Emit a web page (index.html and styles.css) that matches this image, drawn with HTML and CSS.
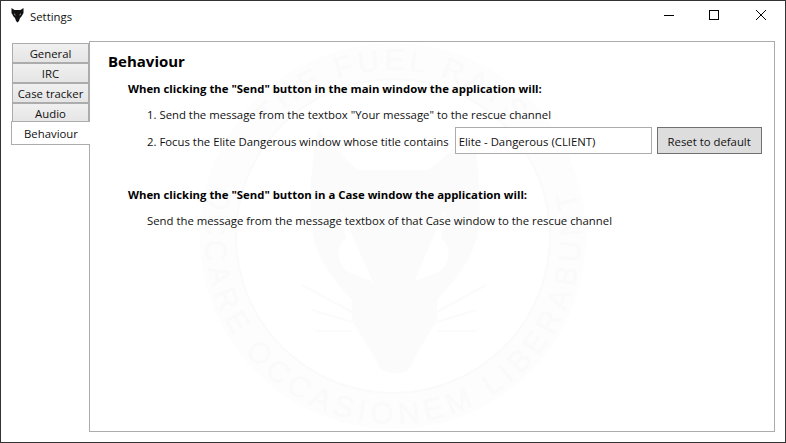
FILE: index.html
```html
<!DOCTYPE html>
<html lang="en">
<head>
  <meta charset="UTF-8">
  <meta name="viewport" content="width=device-width, initial-scale=1.0">
  <title>Settings</title>
  <link rel="stylesheet" href="styles.css">
</head>
<body>
  <div class="window">
    <div class="titlebar">
      <svg class="app-icon" width="16" height="16" viewBox="0 0 16 16">
        <path d="M1.5 0 L4.5 2 L10.5 2 L13.5 0 L13.5 5 L11.5 8.5 L10 10 L9 13 L7.5 14.5 L6 13 L5 10 L3.5 8.5 L1.5 5 Z" fill="#111"/>
        <path d="M4 5 L6 7.5 L4.5 7 Z M11 5 L9 7.5 L10.5 7 Z" fill="#bbb"/>
      </svg>
      <span class="title">Settings</span>
      <div class="controls">
        <svg width="46" height="30" viewBox="0 0 46 30"><path d="M17 14.5 H27" stroke="#000" fill="none"/></svg>
        <svg width="46" height="30" viewBox="0 0 46 30"><rect x="16.5" y="9.5" width="9" height="9" stroke="#000" fill="none"/></svg>
        <svg width="46" height="30" viewBox="0 0 46 30"><path d="M17 9 L27 19 M27 9 L17 19" stroke="#000" fill="none"/></svg>
      </div>
    </div>

    <div class="content">
      <div class="tabs">
        <div class="tab">General</div>
        <div class="tab">IRC</div>
        <div class="tab">Case tracker</div>
        <div class="tab">Audio</div>
        <div class="tab tab-active">Behaviour</div>
      </div>

      <div class="panel">
        <svg class="watermark" width="400" height="400" viewBox="0 0 400 400">
          <defs>
            <path id="ringTop" d="M 34 200 A 166 166 0 0 1 366 200"/>
            <path id="ringBottom" d="M 46 92 A 188 188 0 1 0 354 92"/>
          </defs>
          <circle class="ring" cx="200" cy="200" r="175"/>
          <circle class="ring-line" cx="200" cy="200" r="157"/>
          <text class="watermark-text"><textPath href="#ringTop" startOffset="50%" text-anchor="middle">THE FUEL RATS</textPath></text>
          <text class="watermark-text watermark-motto"><textPath href="#ringBottom" startOffset="50%" text-anchor="middle">OCCARE OCCASIONEM LIBERABUNT</textPath></text>
          <g transform="translate(-193 -36)">
            <path class="rat-head" d="M318 130 C330 140 345 160 358 170 L428 170 C445 160 460 140 472 130 C480 170 482 210 477 235 C472 262 450 285 437 300 L437 320 C425 340 415 355 410 368 C405 375 385 375 380 368 C375 355 362 340 352 320 L352 300 C338 285 318 262 313 235 C308 210 310 170 318 130 Z"/>
            <path class="rat-eye" d="M340 208 L373 282 C360 275 345 275 340 262 C336 250 340 243 346 238 Z M446 208 L414 282 C427 275 442 275 447 262 C451 250 447 243 441 238 Z"/>
            <path class="rat-whiskers" d="M352 312 L302 285 M352 322 L312 310 M352 331 L316 331 M437 312 L486 285 M437 322 L476 310 M437 331 L476 331"/>
          </g>
        </svg>

        <h1 class="heading">Behaviour</h1>
        <div class="section">
          <h2 class="subheading">When clicking the "Send" button in the main window the application will:</h2>
          <div class="line line-first">1. Send the message from the textbox "Your message" to the rescue channel</div>
          <div class="line line-field">
            <span class="field-label">2. Focus the Elite Dangerous window whose title contains</span>
            <input class="textbox" type="text" value="Elite - Dangerous (CLIENT)">
            <button class="reset-button">Reset to default</button>
          </div>
        </div>
        <div class="section section-case">
          <h2 class="subheading">When clicking the "Send" button in a Case window the application will:</h2>
          <div class="line line-plain">Send the message from the message textbox of that Case window to the rescue channel</div>
        </div>
      </div>
    </div>
  </div>
</body>
</html>
```

FILE: styles.css
```css
* {
  box-sizing: border-box;
}
html, body {
  margin: 0;
  padding: 0;
}
body {
  width: 786px;
  height: 443px;
  overflow: hidden;
  background: #fff;
  font-family: "Open Sans", "Noto Sans", sans-serif;
  font-size: 11.35px;
  color: #000;
}
.window {
  width: 786px;
  height: 443px;
  border: 1px solid #333;
  display: flex;
  flex-direction: column;
}
.titlebar {
  height: 30px;
  display: flex;
  align-items: center;
  padding-left: 9px;
}
.app-icon {
  margin-right: 4px;
}
.title {
  color: #111;
}
.controls {
  margin-left: auto;
  display: flex;
}
.content {
  flex: 1;
  display: flex;
  padding: 10px;
}
.tabs {
  width: 79px;
  display: flex;
  flex-direction: column;
  padding-top: 2px;
  align-items: flex-end;
  position: relative;
  z-index: 1;
  margin-right: -1px;
}
.tab {
  width: 77px;
  height: 20px;
  margin-right: 1px;
  border: 1px solid #acacac;
  background: linear-gradient(#f0f0f0, #e5e5e5);
  text-align: center;
  line-height: 20px;
  color: #111;
}
.tab-active {
  width: 79px;
  height: 24px;
  margin-top: -2px;
  margin-right: 0;
  background: #fff;
  border-right: none;
  line-height: 24px;
}
.panel {
  flex: 1;
  position: relative;
  overflow: hidden;
  border: 1px solid #acacac;
  padding: 8px 12px 0 18px;
}
/* faint seal behind the page text */
.watermark {
  position: absolute;
  left: 103px;
  top: -6px;
}
.ring {
  fill: none;
  stroke: #fdfdfd;
  stroke-width: 36px;
}
.ring-line {
  fill: none;
  stroke: #fafafa;
  stroke-width: 2px;
}
.watermark-text {
  font-family: "Liberation Sans", sans-serif;
  font-size: 30px;
  fill: #fafafa;
  letter-spacing: 4px;
}
.watermark-motto {
  letter-spacing: 5.5px;
}
.rat-head {
  fill: #fbfbfb;
}
.rat-eye {
  fill: #fff;
}
.rat-whiskers {
  fill: none;
  stroke: #fbfbfb;
  stroke-width: 2px;
}
.heading, .section {
  position: relative;
}
.heading {
  margin: 0;
  font-size: 15px;
  line-height: 22px;
  font-weight: 700;
}
.section {
  padding-left: 20px;
}
.subheading {
  margin: 9px 0 0;
  font-size: 11.35px;
  line-height: 16px;
  font-weight: 700;
}
.line {
  line-height: 16px;
  color: #111;
}
.line-first {
  margin-top: 10px;
  padding-left: 19px;
}
.line-field {
  margin-top: 4px;
  padding-left: 19px;
  display: flex;
  align-items: center;
}
.field-label {
  padding-top: 2px;
}
.line-plain {
  margin-top: 10px;
  padding-left: 19px;
}
.section-case {
  margin-top: 33px;
}
.textbox {
  width: 197px;
  height: 27px;
  margin-left: 6px;
  padding: 2px 3px 0;
  border: 1px solid #acacac;
  font: inherit;
  color: #111;
  background: #fff;
  outline: none;
}
.reset-button {
  width: 105px;
  height: 27px;
  margin-left: 5px;
  padding: 2px 0 0;
  border: 1px solid #707070;
  background: #ddd;
  font: inherit;
  color: #111;
}
```
